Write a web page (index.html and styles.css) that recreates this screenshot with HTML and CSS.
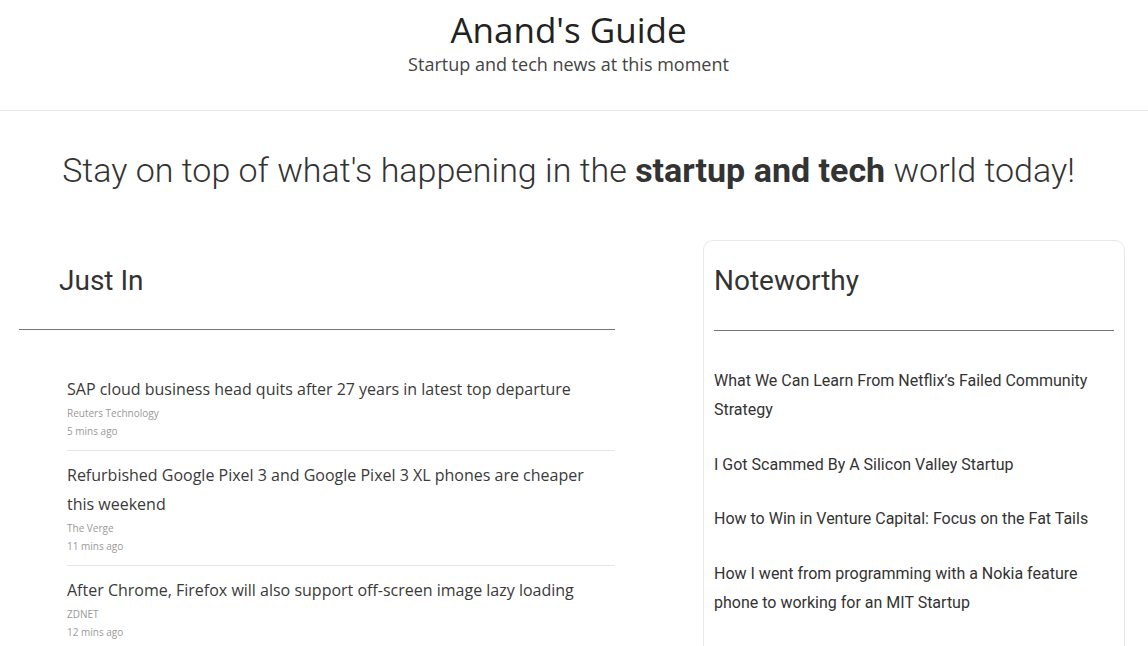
FILE: index.html
```html
<!DOCTYPE html>
<html lang="en">
<head>
<meta charset="utf-8">
<title>Anand's Guide</title>
<link rel="stylesheet" href="styles.css">
</head>
<body>
<div class="page">
<header class="site-header">
  <h1 class="site-title">Anand's Guide</h1>
  <p class="site-subtitle">Startup and tech news at this moment</p>
</header>
<main class="main">
  <h2 class="tagline">Stay on top of what's happening in the <strong>startup and tech</strong> world today!</h2>
  <div class="columns">
    <section class="just-in">
      <h3 class="section-title">Just In</h3>
      <hr class="section-rule">
      <ul class="news-list">
        <li class="news-item">
          <a class="news-title" href="#">SAP cloud business head quits after 27 years in latest top departure</a>
          <div class="news-source">Reuters Technology</div>
          <div class="news-time">5 mins ago</div>
        </li>
        <li class="news-item">
          <a class="news-title" href="#">Refurbished Google Pixel 3 and Google Pixel 3 XL phones are cheaper this weekend</a>
          <div class="news-source">The Verge</div>
          <div class="news-time">11 mins ago</div>
        </li>
        <li class="news-item">
          <a class="news-title" href="#">After Chrome, Firefox will also support off-screen image lazy loading</a>
          <div class="news-source">ZDNET</div>
          <div class="news-time">12 mins ago</div>
        </li>
      </ul>
    </section>
    <aside class="noteworthy">
      <h3 class="card-title">Noteworthy</h3>
      <hr class="section-rule">
      <ul class="note-list">
        <li><a href="#">What We Can Learn From Netflix’s Failed Community Strategy</a></li>
        <li><a href="#">I Got Scammed By A Silicon Valley Startup</a></li>
        <li><a href="#">How to Win in Venture Capital: Focus on the Fat Tails</a></li>
        <li><a href="#">How I went from programming with a Nokia feature phone to working for an MIT Startup</a></li>
      </ul>
    </aside>
  </div>
</main>
</div>
</body>
</html>
```
FILE: styles.css
```css
* { box-sizing: border-box; }
html, body { margin: 0; padding: 0; background: #fff; }
body { font-family: "Open Sans", sans-serif; color: #333; }
a { color: inherit; text-decoration: none; }

.page { margin-right: 11px; }

.site-header {
  text-align: center;
  padding: 8px 11px 34px 0;
  border-bottom: 1px solid #e6e6e6;
  margin-right: -11px;
}
.site-title {
  margin: 0;
  font-family: "Open Sans", sans-serif;
  font-weight: 400;
  font-size: 35px;
  line-height: 44px;
  color: #222;
}
.site-subtitle {
  margin: 0;
  font-size: 18px;
  line-height: 24px;
  color: #444;
}

.main { padding: 0 12px 0 19px; }
.tagline {
  margin: 36px 0 0;
  padding-right: 7px;
  text-align: center;
  font-family: Roboto, sans-serif;
  font-weight: 300;
  font-size: 34px;
  line-height: 46px;
  color: #333;
}
.tagline strong { font-weight: 700; }

.columns {
  display: flex;
  align-items: flex-start;
  justify-content: space-between;
  margin-top: 47px;
}
.just-in { width: 596px; }
.section-title {
  margin: 0;
  padding: 25px 0 0 40px;
  font-family: Roboto, sans-serif;
  font-weight: 400;
  font-size: 28px;
  line-height: 32px;
  color: #333;
}
.section-rule {
  border: 0;
  border-top: 1px solid #777;
  margin: 32px 0 0;
}
.news-list {
  list-style: none;
  margin: 35px 0 0 48px;
  padding: 0;
}
.news-item {
  padding: 10px 0;
  border-bottom: 1px solid #e6e6e6;
}
.news-item:last-child { border-bottom: 0; }
.news-title {
  display: block;
  font-size: 16px;
  line-height: 29px;
  color: #3a3a3a;
}
.news-source, .news-time {
  font-size: 10px;
  line-height: 18px;
  color: #999;
}

.noteworthy {
  width: 422px;
  border: 1px solid #e8e8e8;
  border-radius: 10px;
  padding: 24px 10px 20px 10px;
  font-family: Roboto, sans-serif;
}
.card-title {
  margin: 0;
  font-family: Roboto, sans-serif;
  font-weight: 400;
  font-size: 28px;
  line-height: 32px;
  color: #333;
}
.noteworthy .section-rule { margin-top: 33px; }
.note-list {
  list-style: none;
  margin: 35px 0 0;
  padding: 0;
}
.note-list li {
  font-size: 16px;
  line-height: 29px;
  color: #333;
  margin-bottom: 25.5px;
}
```
